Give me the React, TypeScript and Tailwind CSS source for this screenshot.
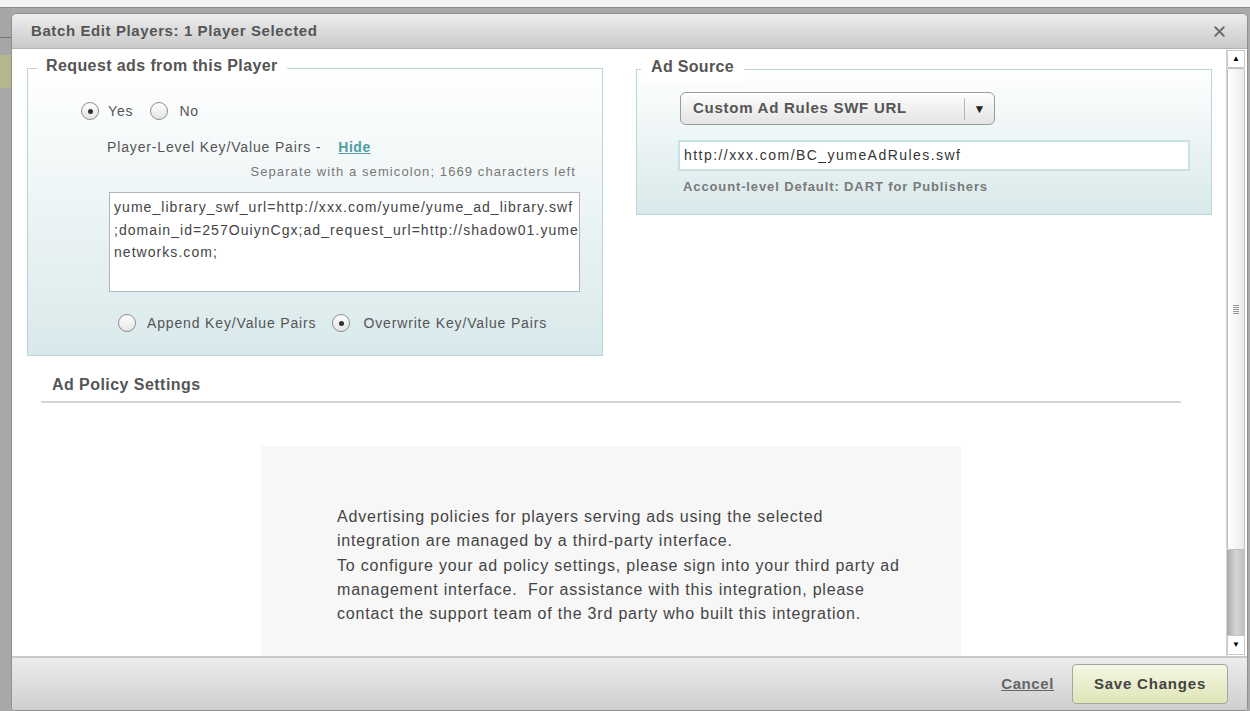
import { X } from "lucide-react";

// Batch edit dialog for ad settings of the selected players.

const font = "font-['Liberation_Sans',Arial,sans-serif]";

function Radio({ checked }: { checked?: boolean }) {
  return (
    <span className="flex h-[18px] w-[18px] shrink-0 items-center justify-center rounded-full border border-[#8d8d8d] bg-gradient-to-b from-white to-[#e4e4e4]">
      {checked && <span className="h-[5px] w-[5px] rounded-full bg-[#333]" />}
    </span>
  );
}

function Scrollbar() {
  return (
    <div className="flex w-[19px] flex-col border-l border-[#d4d4d4] bg-white py-px">
      <div className="flex h-[18px] items-center justify-center border border-[#c8c8c8] bg-white">
        <span className="text-[8px] leading-none text-black">▲</span>
      </div>
      <div className="flex h-[482px] items-center justify-center rounded-[2px] border border-[#bdbdbd] bg-gradient-to-r from-white to-[#ececec] shadow-[1px_1px_1px_rgba(0,0,0,0.15)]">
        <div className="flex flex-col gap-[1px]">
          <span className="h-px w-[6px] bg-[#999]" />
          <span className="h-px w-[6px] bg-[#999]" />
          <span className="h-px w-[6px] bg-[#999]" />
          <span className="h-px w-[6px] bg-[#999]" />
          <span className="h-px w-[6px] bg-[#999]" />
        </div>
      </div>
      <div className="flex-1 bg-gradient-to-r from-[#a9a9a9] via-[#d6d6d6] to-[#bdbdbd]" />
      <div className="flex h-[20px] items-center justify-center border border-[#c8c8c8] bg-white">
        <span className="text-[8px] leading-none text-black">▼</span>
      </div>
    </div>
  );
}

function RequestAdsBox() {
  return (
    <fieldset className="h-[301px] w-[576px] rounded-none border border-[#b9d5d8] bg-gradient-to-b from-white to-[#d9e9eb]">
      <legend className="ml-[9px] bg-white px-[9px] pt-[2px] pb-[6px] text-[16px] leading-[18px] font-bold tracking-[0.4px] text-[#555]">
        Request ads from this Player
      </legend>
      <div className="flex flex-col text-[14px] tracking-[0.85px] text-[#555]">
        <div className="mt-[21px] flex h-[18px] items-center pl-[53px]">
          <Radio checked />
          <span className="ml-[9px]">Yes</span>
          <span className="ml-[17px]">
            <Radio />
          </span>
          <span className="ml-[11px]">No</span>
        </div>
        <div className="mt-[18px] flex h-[18px] items-center pl-[79px]">
          <span>Player-Level Key/Value Pairs -</span>
          <span className="ml-[17px] font-bold tracking-[0.5px] text-[#4e9ea3] underline">Hide</span>
        </div>
        <div className="mt-[8px] pr-[26px] text-right text-[13px] leading-[16px] tracking-[1.1px] text-[#777]">
          Separate with a semicolon; 1669 characters left
        </div>
        <div className="mt-[12px] ml-[81px] h-[100px] w-[471px] border border-[#b4b4b4] bg-white px-[4px] pt-[3px] text-[14px] leading-[22.5px] tracking-[1.05px] whitespace-nowrap text-[#444]">
          <div>yume_library_swf_url=http://xxx.com/yume/yume_ad_library.swf</div>
          <div>;domain_id=257OuiynCgx;ad_request_url=http://shadow01.yume</div>
          <div>networks.com;</div>
        </div>
        <div className="mt-[22px] flex h-[18px] items-center pl-[90px]">
          <Radio />
          <span className="ml-[11px]">Append Key/Value Pairs</span>
          <span className="ml-[16px]">
            <Radio checked />
          </span>
          <span className="ml-[13px]">Overwrite Key/Value Pairs</span>
        </div>
      </div>
    </fieldset>
  );
}

function AdSourceBox() {
  return (
    <fieldset className="mt-px h-[159px] w-[576px] rounded-none border border-[#b9d5d8] bg-gradient-to-b from-white to-[#d9e9eb]">
      <legend className="ml-[4px] bg-white px-[10px] pt-[2px] pb-[6px] text-[16px] leading-[18px] font-bold tracking-[0.33px] text-[#555]">
        Ad Source
      </legend>
      <div className="flex flex-col">
        <div className="mt-[10px] ml-[43px] flex h-[33px] w-[315px] items-center rounded-[6px] border border-[#9a9a9a] bg-gradient-to-b from-[#fdfdfd] to-[#e4e4e4]">
          <span className="flex-1 pl-[12px] text-[15px] font-bold tracking-[0.74px] text-[#555]">Custom Ad Rules SWF URL</span>
          <span className="h-[22px] w-px bg-[#b5b5b5]" />
          <span className="flex w-[29px] justify-center text-[12px] text-[#222]">▼</span>
        </div>
        <div className="mt-[15px] ml-[41px] flex h-[31px] w-[512px] items-center border-2 border-[#c6e2e2] bg-white px-[4px] text-[14px] tracking-[1.45px] text-[#333]">
          http://xxx.com/BC_yumeAdRules.swf
        </div>
        <div className="mt-[8px] ml-[46px] text-[13px] leading-[16px] font-bold tracking-[0.88px] text-[#7a7a7a]">
          Account-level Default: DART for Publishers
        </div>
      </div>
    </fieldset>
  );
}

function AdPolicy() {
  return (
    <div className="flex flex-col">
      <div className="mt-[19px] ml-[14px] w-[1140px] border-b-2 border-[#d2d4d6] pb-[6px] pl-[11px] text-[16px] leading-[20px] font-bold tracking-[0.45px] text-[#555]">
        Ad Policy Settings
      </div>
      <div className="mt-[43px] ml-[234px] h-[240px] w-[700px] bg-[#f7f7f7] pt-[59px] pl-[76px] text-[16px] leading-[24.3px] tracking-[0.8px] whitespace-nowrap text-[#444]">
        <div>Advertising policies for players serving ads using the selected</div>
        <div>integration are managed by a third-party interface.</div>
        <div>To configure your ad policy settings, please sign into your third party ad</div>
        <div>management interface.&nbsp; For assistance with this integration, please</div>
        <div>contact the support team of the 3rd party who built this integration.</div>
      </div>
    </div>
  );
}

export default function App() {
  return (
    <div className={`${font} flex h-[711px] w-[1250px] flex-col overflow-hidden bg-[#a9a9a9]`}>
      <div className="h-[8px] shrink-0 border-b border-[#8a8a8a] bg-[#f2f2f2]" />
      <div className="flex flex-1">
        {/* backdrop strip left of the dialog */}
        <div className="flex w-[11px] flex-col">
          <div className="h-[29px] bg-[#a6a6a6]" />
          <div className="h-px bg-[#6f7378]" />
          <div className="h-[17px] bg-[#a6a6a6]" />
          <div className="h-[33px] bg-[#b6b68c]" />
          <div className="flex-1 bg-[#a8a8a8]" />
        </div>

        <div className="mt-[5px] mr-[2px] flex flex-1 flex-col overflow-hidden rounded-t-[6px] rounded-b-[4px] border border-[#8f8f8f] bg-white">
          <div className="flex h-[35px] shrink-0 items-center justify-between border-b border-[#b3b3b3] bg-gradient-to-b from-[#eeeeee] to-[#c9c9c9] pr-[19px] pl-[19px]">
            <span className="text-[15px] font-bold tracking-[0.6px] text-[#555]">Batch Edit Players: 1 Player Selected</span>
            <X size={17} strokeWidth={2.6} className="text-[#6a6a6a]" />
          </div>

          <div className="flex h-[607px] shrink-0">
            <div className="flex-1 overflow-hidden pt-[6px] pl-[15px]">
              <div className="flex items-start gap-[33px]">
                <RequestAdsBox />
                <AdSourceBox />
              </div>
              <AdPolicy />
            </div>
            <Scrollbar />
            <div className="w-[2px] bg-white" />
          </div>

          <div className="flex flex-1 items-center justify-end gap-[18px] border-t-2 border-[#c9c9c9] bg-gradient-to-b from-[#ececec] to-[#cfcfcf] pr-[19px]">
            <span className="text-[15px] font-bold tracking-[0.6px] text-[#666] underline">Cancel</span>
            <button className="h-[40px] w-[156px] rounded-[4px] border border-[#a5a5a5] bg-gradient-to-b from-[#f5f7e4] to-[#dfe5b7] text-[15px] font-bold tracking-[0.8px] text-[#444]">
              Save Changes
            </button>
          </div>
        </div>
      </div>
    </div>
  );
}
